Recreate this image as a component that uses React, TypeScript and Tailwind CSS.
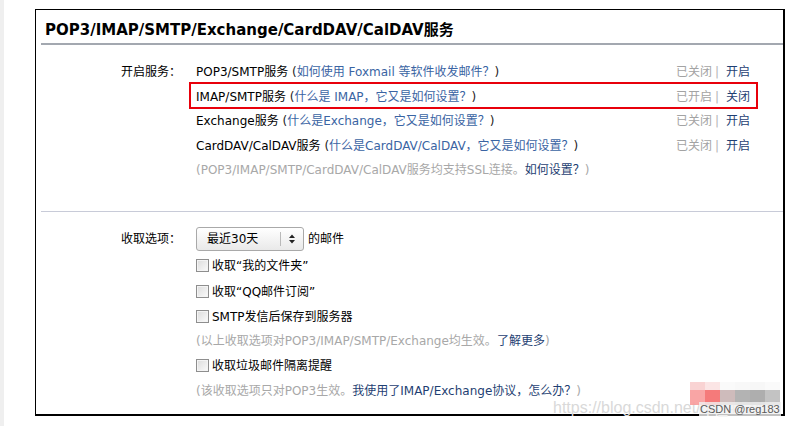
import React from "react";

const FONT = { fontFamily: '"DejaVu Sans", "Noto Sans CJK SC", sans-serif' };

function Status({ state, action }: { state: string; action: string }) {
  return (
    <span className="flex items-center whitespace-nowrap">
      <span className="text-[#a3a3a3]">{state}</span>
      <span className="text-[#b5b5b5] ml-[3px] mr-[7px]">|</span>
      <span className="text-[#1f3f73]">{action}</span>
    </span>
  );
}

function ServiceRow({
  name,
  help,
  state,
  action,
  highlight,
}: {
  name: string;
  help: string;
  state: string;
  action: string;
  highlight?: boolean;
}) {
  return (
    <div className="relative flex h-[24.5px] items-center justify-between">
      <span className="whitespace-nowrap text-black">
        {name} <span className="text-[#222]">(</span>
        <span className="text-[#3a64a3]">{help}</span>
        <span className="text-[#222]">)</span>
      </span>
      <Status state={state} action={action} />
      {highlight && (
        <span className="pointer-events-none absolute left-[-7px] right-[-8px] top-[-3px] bottom-[0px] border-2 border-[#e8000b]" />
      )}
    </div>
  );
}

function Checkbox() {
  return (
    <span className="inline-block h-[13px] w-[13px] shrink-0 border border-[#8e8e8e] bg-gradient-to-br from-[#dcdcdc] to-[#fbfbfb] shadow-[inset_0_0_0_1px_#f4f4f4]" />
  );
}

function CheckRow({ label, h }: { label: string; h: string }) {
  return (
    <div className={`flex items-center gap-[3px] ${h}`}>
      <Checkbox />
      <span className="text-black whitespace-nowrap">{label}</span>
    </div>
  );
}

export default function App() {
  return (
    <div
      className="relative flex h-[426px] w-[796px] overflow-hidden bg-white text-[12px]"
      style={FONT}
    >
      <div className="h-full w-[4px] bg-[#efefef]" />
      <div className="ml-[31px] mt-[9px] flex h-[407px] w-[750px] flex-col border-l border-t border-r-2 border-b-2 border-black pl-[5px]">
        <div className="h-[33px] pl-[4px] pt-[12px] text-[15px] font-bold leading-[17px] text-black">
          POP3/IMAP/SMTP/Exchange/CardDAV/CalDAV服务
        </div>
        <div className="h-[2px] bg-[#a3a8b0]" />

        <div className="mt-[15px] flex">
          <div className="w-[155px] shrink-0 pr-[15px] text-right leading-[24.5px] text-black">
            开启服务：
          </div>
          <div className="flex flex-1 flex-col pr-[33px]">
            <ServiceRow
              name="POP3/SMTP服务"
              help="如何使用 Foxmail 等软件收发邮件？"
              state="已关闭"
              action="开启"
            />
            <ServiceRow
              name="IMAP/SMTP服务"
              help="什么是 IMAP，它又是如何设置？"
              state="已开启"
              action="关闭"
              highlight
            />
            <ServiceRow
              name="Exchange服务"
              help="什么是Exchange，它又是如何设置？"
              state="已关闭"
              action="开启"
            />
            <ServiceRow
              name="CardDAV/CalDAV服务"
              help="什么是CardDAV/CalDAV，它又是如何设置？"
              state="已关闭"
              action="开启"
            />
            <div className="flex h-[24.5px] items-center whitespace-nowrap text-[#a8a8a8]">
              (POP3/IMAP/SMTP/CardDAV/CalDAV服务均支持SSL连接。
              <span className="text-[#1f3f73]">如何设置？</span>)
            </div>
          </div>
        </div>

        <div className="mt-[28px] h-[1px] bg-[#c8cbd8]" />

        <div className="mt-[14px] flex">
          <div className="w-[155px] shrink-0 pr-[15px] text-right leading-[27px] text-black">
            收取选项：
          </div>
          <div className="flex flex-1 flex-col">
            <div className="flex h-[27px] items-center">
              <div className="flex h-[24px] w-[108px] items-center rounded-[3px] border border-[#a9a9a9] bg-gradient-to-b from-[#ffffff] to-[#e9e9e9]">
                <span className="flex-1 pl-[10px] text-black">最近30天</span>
                <span className="h-[14px] w-px bg-[#b9b9b9]" />
                <span className="flex w-[22px] flex-col items-center justify-center leading-none">
                  <svg width="6" height="10" viewBox="0 0 6 10">
                    <path d="M0 4 L3 0.5 L6 4 Z M0 6 L3 9.5 L6 6 Z" fill="#222" />
                  </svg>
                </span>
              </div>
              <span className="ml-[4px] text-black">的邮件</span>
            </div>
            <CheckRow label="收取“我的文件夹”" h="h-[26px]" />
            <CheckRow label="收取“QQ邮件订阅”" h="h-[26px]" />
            <CheckRow label="SMTP发信后保存到服务器" h="h-[24px]" />
            <div className="flex h-[25px] items-center whitespace-nowrap text-[#a8a8a8]">
              (以上收取选项对POP3/IMAP/SMTP/Exchange均生效。
              <span className="text-[#1f3f73]">了解更多</span>)
            </div>
            <CheckRow label="收取垃圾邮件隔离提醒" h="h-[24px]" />
            <div className="flex h-[26px] items-center whitespace-nowrap text-[#a8a8a8]">
              (该收取选项只对POP3生效。
              <span className="text-[#1f3f73]">我使用了IMAP/Exchange协议，怎么办？</span>)
            </div>
          </div>
        </div>
      </div>

      {/* watermark overlay */}
      <div
        className="pointer-events-none absolute left-[553px] top-[397px] whitespace-nowrap text-[16px] leading-[22px] text-[#d9d9d9]"
        style={{ fontFamily: '"Liberation Sans", sans-serif' }}
      >
        https://blog.csdn.net/qq_412416
      </div>
      <div className="pointer-events-none absolute left-[690px] top-[382px] grid grid-cols-[15px_15px_15px_15px_15px_15px] grid-rows-[8px_15px] opacity-90">
        <span className="bg-[#f9cfcf]" />
        <span className="bg-[#fbe3e3]" />
        <span className="bg-[#fafafa]" />
        <span className="bg-[#f8f8f8]" />
        <span className="bg-[#f7f7f7]" />
        <span className="bg-[#fafafa]" />
        <span className="bg-[#f99c9c]" />
        <span className="bg-[#f46c6c]" />
        <span className="bg-[#c9b4b4]" />
        <span className="bg-[#ababab]" />
        <span className="bg-[#a6a6a6]" />
        <span className="bg-[#bdbdbd]" />
      </div>
      <div
        className="pointer-events-none absolute left-[699px] top-[402px] whitespace-nowrap bg-[#f1f1f1]/80 px-[1px] text-[11px] leading-[14px] text-[#5a5a5a]"
        style={{ fontFamily: '"Liberation Sans", sans-serif' }}
      >
        CSDN @reg183
      </div>
    </div>
  );
}
